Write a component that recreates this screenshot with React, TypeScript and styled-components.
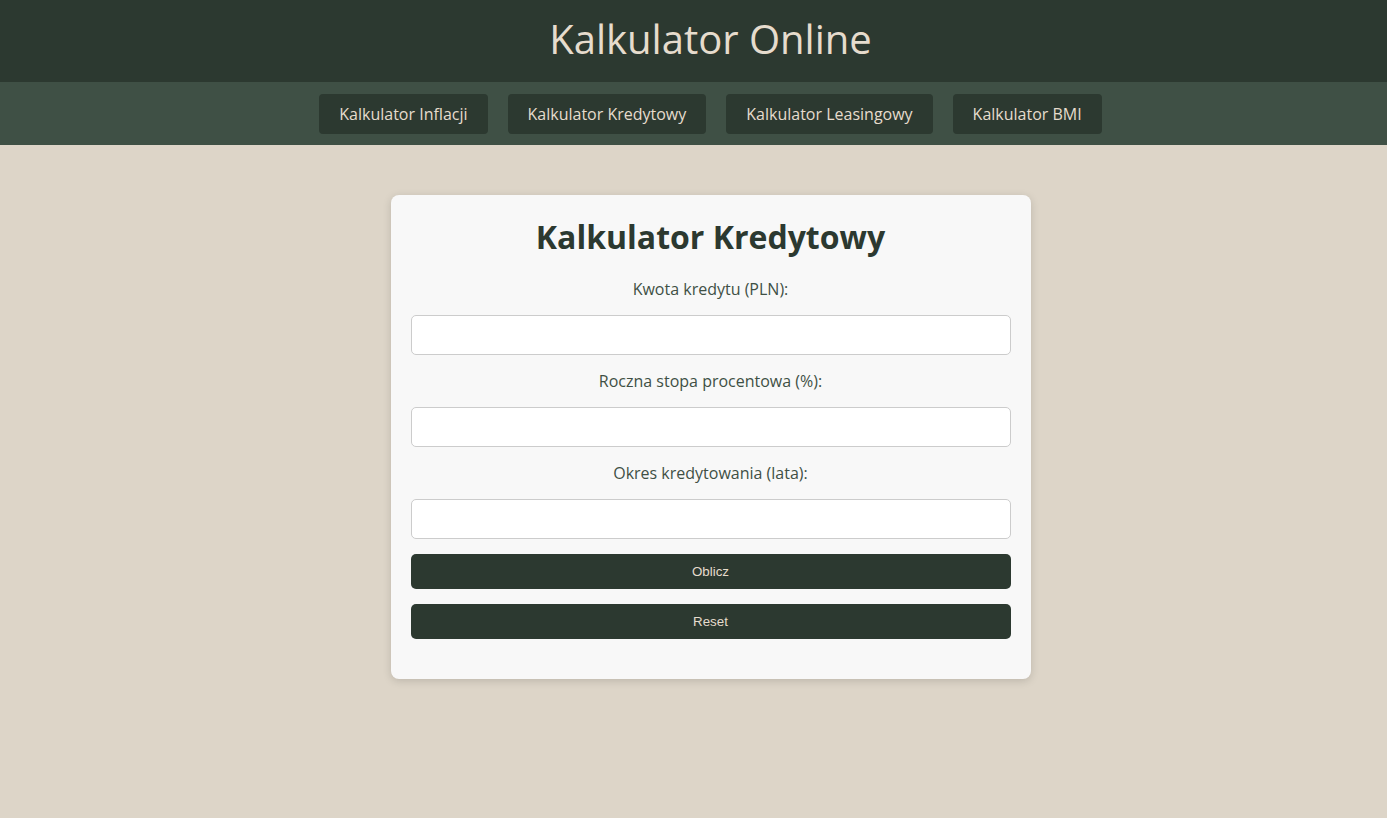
import React from "react";
import styled, { createGlobalStyle } from "styled-components";

const Global = createGlobalStyle`
  html, body { margin: 0; padding: 0; }
  body {
    background: #ddd5c8;
    font-family: "Open Sans", "Liberation Sans", sans-serif;
    color: #2c3930;
    min-height: 100vh;
  }
`;

const Header = styled.header`
  background: #2c3930;
  height: 82px;
  padding-left: 34px;
  box-sizing: border-box;
  display: flex;
  align-items: center;
  justify-content: center;
`;

const SiteTitle = styled.h1`
  margin: 0 0 5px;
  font-size: 40px;
  font-weight: 400;
  color: #e6dccd;
`;

const Nav = styled.nav`
  background: #3f5045;
  height: 63px;
  padding-left: 34px;
  box-sizing: border-box;
  display: flex;
  align-items: center;
  justify-content: center;
  gap: 20px;
`;

const NavButton = styled.a`
  display: flex;
  align-items: center;
  height: 40px;
  padding: 0 20px;
  box-sizing: border-box;
  background: #2c3930;
  color: #e6dccd;
  border-radius: 4px;
  font-size: 16px;
  text-decoration: none;
`;

const Main = styled.main`
  display: flex;
  justify-content: center;
  padding: 50px 0 0 34px;
`;

const Card = styled.section`
  width: 640px;
  box-sizing: border-box;
  background: #f8f8f8;
  border-radius: 8px;
  padding: 20px 20px 40px;
  box-shadow: 0 2px 8px rgba(0, 0, 0, 0.15);
  display: flex;
  flex-direction: column;
`;

const CardTitle = styled.h2`
  margin: 0 0 19px;
  font-size: 32px;
  line-height: 44px;
  font-weight: 700;
  text-align: center;
  color: #2c3930;
`;

const Label = styled.label`
  display: block;
  text-align: center;
  font-size: 16px;
  line-height: 22px;
  color: #3f5045;
  margin-bottom: 15px;
`;

const Input = styled.input`
  display: block;
  width: 100%;
  height: 40px;
  box-sizing: border-box;
  border: 1px solid #ccc;
  border-radius: 5px;
  background: #fff;
  margin-bottom: 15px;
  font-size: 16px;
  padding: 0 10px;
`;

const ActionButton = styled.button`
  display: block;
  width: 100%;
  height: 35px;
  border: none;
  border-radius: 5px;
  background: #2c3930;
  color: #e6dccd;
  font-family: "Liberation Sans", Arial, sans-serif;
  font-size: 13.33px;
  margin-bottom: 15px;
  &:last-child { margin-bottom: 0; }
`;

const fields = [
  "Kwota kredytu (PLN):",
  "Roczna stopa procentowa (%):",
  "Okres kredytowania (lata):",
];

export default function App() {
  return (
    <>
      <Global />
      <Header>
        <SiteTitle>Kalkulator Online</SiteTitle>
      </Header>
      <Nav>
        <NavButton>Kalkulator Inflacji</NavButton>
        <NavButton>Kalkulator Kredytowy</NavButton>
        <NavButton>Kalkulator Leasingowy</NavButton>
        <NavButton>Kalkulator BMI</NavButton>
      </Nav>
      <Main>
        <Card>
          <CardTitle>Kalkulator Kredytowy</CardTitle>
          {fields.map((f) => (
            <React.Fragment key={f}>
              <Label>{f}</Label>
              <Input type="number" />
            </React.Fragment>
          ))}
          <ActionButton>Oblicz</ActionButton>
          <ActionButton>Reset</ActionButton>
        </Card>
      </Main>
    </>
  );
}
